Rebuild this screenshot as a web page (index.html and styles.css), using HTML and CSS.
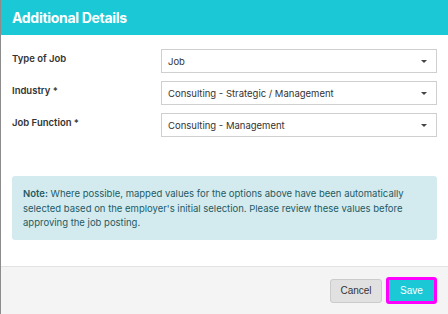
FILE: index.html
```html
<!DOCTYPE html>
<html lang="en">
<head>
    <meta charset="UTF-8">
    <meta name="viewport" content="width=device-width, initial-scale=1.0">
    <title>Additional Details</title>
    <link rel="stylesheet" href="styles.css">
</head>
<body>
    <div class="modal">
        <div class="modal-header">Additional Details</div>

        <div class="modal-body">
            <div class="form-row">
                <label for="job-type">Type of Job</label>
                <div class="select-box" id="job-type">
                    <span>Job</span>
                    <span class="caret"></span>
                </div>
            </div>

            <div class="form-row">
                <label for="industry">Industry *</label>
                <div class="select-box" id="industry">
                    <span>Consulting - Strategic / Management</span>
                    <span class="caret"></span>
                </div>
            </div>

            <div class="form-row">
                <label for="job-function">Job Function *</label>
                <div class="select-box" id="job-function">
                    <span>Consulting - Management</span>
                    <span class="caret"></span>
                </div>
            </div>

            <!-- Ghi chú -->
            <div class="note">
                <p><b>Note:</b> Where possible, mapped values for the options above have been automatically selected based on the employer's initial selection. Please review these values before approving the job posting.</p>
            </div>
        </div>

        <div class="modal-footer">
            <button class="btn cancel-btn">Cancel</button>
            <button class="btn save-btn">Save</button>
        </div>
    </div>
</body>
</html>
```

FILE: styles.css
```css
body, html {
    margin: 0;
    padding: 0;
    width: 100%;
    height: 100%;
    font-family: Inter, 'Noto Sans', sans-serif;
    background: #fff;
}

.modal {
    height: 314px;
    border-left: 1px solid #8c8c8c;
    display: flex;
    flex-direction: column;
    box-sizing: border-box;
}

.modal-header {
    height: 35px;
    flex: none;
    background-color: #1bc8d5;
    color: #fff;
    font-size: 14px;
    font-weight: bold;
    padding: 0 11px;
    display: flex;
    align-items: center;
    letter-spacing: -0.3px;
}

.modal-body {
    flex: 1;
    padding: 14px 11px 0 11px;
    display: flex;
    flex-direction: column;
    gap: 8px;
}

.form-row {
    display: grid;
    grid-template-columns: 149px 1fr;
    align-items: start;
}

.form-row label {
    font-size: 9.5px;
    font-weight: 600;
    color: #333;
    padding-top: 4px;
}

.select-box {
    height: 24px;
    box-sizing: border-box;
    border: 1px solid #cfcfcf;
    padding: 0 9px 0 6px;
    display: flex;
    align-items: center;
    justify-content: space-between;
    font-size: 9.5px;
    color: #333;
}

.caret {
    width: 0;
    height: 0;
    border-left: 3px solid transparent;
    border-right: 3px solid transparent;
    border-top: 3px solid #444;
}

.note {
    margin-top: 31px;
    height: 64px;
    box-sizing: border-box;
    background-color: #d3ebef;
    border-radius: 3px;
    padding: 11px 11px 0 11px;
    font-size: 9.5px;
    line-height: 14.5px;
    color: #1f5a64;
}

.note p {
    margin: 0;
}

.note b {
    font-weight: 600;
}

.modal-footer {
    height: 48px;
    flex: none;
    box-sizing: border-box;
    border-top: 1px solid #e2e2e2;
    background-color: #f4f4f4;
    display: flex;
    justify-content: flex-end;
    align-items: center;
    gap: 4px;
    padding: 0 11px 0 0;
}

.btn {
    font-family: 'Liberation Sans', Arial, sans-serif;
    font-size: 10px;
    border-radius: 3px;
    cursor: pointer;
}

.cancel-btn {
    width: 52px;
    height: 24px;
    background-color: #e1e1e1;
    border: 1px solid #cbcbcb;
    color: #333;
}

.save-btn {
    width: 51px;
    height: 27px;
    background-color: #1bc8d5;
    border: 3px solid #ff00ff;
    color: #fff;
}
```
